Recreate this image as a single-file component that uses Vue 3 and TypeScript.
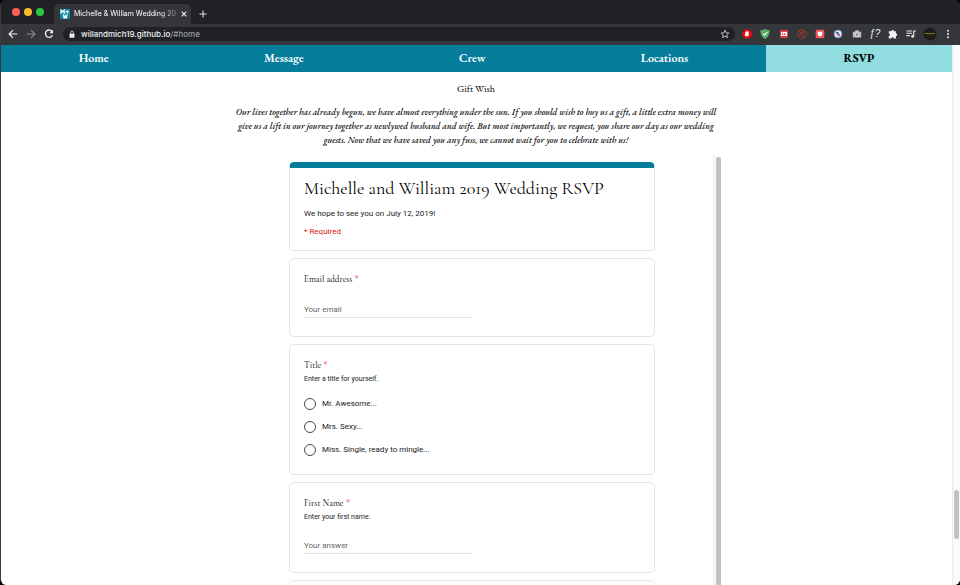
<script setup lang="ts">
import { ref } from 'vue'

interface Question {
  id: string
  label: string
  help?: string
  placeholder?: string
  type?: string
  options?: string[]
}

const links = [
  { label: 'Home', href: '#home' },
  { label: 'Message', href: '#message' },
  { label: 'Crew', href: '#crew' },
  { label: 'Locations', href: '#locations' },
  { label: 'RSVP', href: '#rsvp' },
]
const current = ref('#rsvp')

const wish = [
  'Our lives together has already begun, we have almost everything under the sun. If you should wish to buy us a gift, a little extra money will',
  'give us a lift in our journey together as newlywed husband and wife. But most importantly, we request, you share our day as our wedding',
  'guests. Now that we have saved you any fuss, we cannot wait for you to celebrate with us!',
]

const questions: Question[] = [
  { id: 'email', label: 'Email address', placeholder: 'Your email', type: 'email' },
  {
    id: 'title',
    label: 'Title',
    help: 'Enter a title for yourself.',
    options: ['Mr. Awesome...', 'Mrs. Sexy...', 'Miss. Single, ready to mingle...'],
  },
  { id: 'first', label: 'First Name', help: 'Enter your first name.', placeholder: 'Your answer', type: 'text' },
]
const chosen = ref('')
</script>

<template>
  <div class="browser">
    <header class="chrome">
      <div class="tabs">
        <div class="lights"><i class="red"></i><i class="amber"></i><i class="green"></i></div>
        <div class="tab">
          <svg class="favicon" viewBox="0 0 10 10" aria-hidden="true">
            <rect width="10" height="10" fill="#0c8ba5" />
            <path d="M1 5V1l1.600 2L4.200 1v4M3.200 5.500l1 3.700 1-2.600 1 2.600 1-3.700M5.500 2.600h3.300M7.500 1.400v3" fill="none" stroke="#fff" stroke-width="1.100" />
          </svg>
          <span class="tab-title">Michelle &amp; William Wedding 20</span>
          <button class="plain" aria-label="Close tab">
            <svg width="8" height="8" viewBox="0 0 8 8"><path d="M1.700 1.700l4.600 4.600M6.300 1.700L1.700 6.300" stroke="#e8eaed" stroke-width="1.200" /></svg>
          </button>
        </div>
        <button class="plain new-tab" aria-label="New tab">
          <svg width="10" height="10" viewBox="0 0 10 10"><path d="M5 1.500v7M1.500 5h7" stroke="#dfe1e5" stroke-width="1.100" /></svg>
        </button>
      </div>

      <div class="toolbar">
        <button class="plain" aria-label="Back">
          <svg width="14" height="14" viewBox="0 0 14 14"><path d="M11.300 7H3.400M7 3.100L3.100 7 7 10.900" fill="none" stroke="#f1f3f4" stroke-width="1.200" /></svg>
        </button>
        <button class="plain" aria-label="Forward">
          <svg width="14" height="14" viewBox="0 0 14 14"><path d="M2.700 7h7.900M7 3.100L10.900 7 7 10.900" fill="none" stroke="#8b8d91" stroke-width="1.100" /></svg>
        </button>
        <button class="plain" aria-label="Reload">
          <svg width="14" height="14" viewBox="0 0 14 14"><path d="M10.200 4.600A3.700 3.700 0 1 0 10.500 8.300" fill="none" stroke="#f1f3f4" stroke-width="1.300" /><path d="M11 2.800V6.300H7.500z" fill="#f1f3f4" /></svg>
        </button>
        <div class="address">
          <svg width="8" height="9" viewBox="0 0 8 9" aria-hidden="true"><rect x="1.500" y="3.400" width="5" height="4.400" rx=".6" fill="#e8eaed" /><path d="M2.700 3.600V2.400a1.300 1.300 0 0 1 2.600 0v1.200" fill="none" stroke="#e8eaed" stroke-width=".8" /></svg>
          <span class="url">willandmich19.github.io<span class="path">/#home</span></span>
          <button class="plain" aria-label="Bookmark">
            <svg width="10" height="10" viewBox="0 0 10 10"><path d="M5 1.200l1.100 2.600 2.800.2-2.100 1.900.6 2.700L5 7.200 2.600 8.600l.6-2.700L1.100 4l2.800-.2z" fill="none" stroke="#dfe1e5" stroke-width=".8" /></svg>
          </button>
        </div>
        <div class="extensions">
          <button class="plain" aria-label="Ad blocker">
            <svg width="14" height="14" viewBox="0 0 14 14"><path d="M5.100 2.500h3.800l2.600 2.600v3.800l-2.600 2.600H5.100L2.500 8.900V5.100z" fill="#f4090f" /><path d="M5.400 9.300L4.500 7.300l.8.300V4.900h.8v-.6h.9v-.3h.8v.8h.9v3.500l-.9 1z" fill="#fff" /></svg>
          </button>
          <button class="plain" aria-label="Shield">
            <svg width="14" height="14" viewBox="0 0 14 14"><path d="M7 2q2.200 1.200 4.600 1c.1 4.500-1.500 7.400-4.600 9C3.900 10.400 2.300 7.500 2.400 3 4.800 3.200 7 2 7 2z" fill="#57ad68" /><path d="M5 6.700l1.500 1.500 2.800-3" fill="none" stroke="#fff" stroke-width="1.100" /></svg>
          </button>
          <button class="plain" aria-label="Player">
            <svg width="14" height="14" viewBox="0 0 14 14"><rect x="3" y="3" width="8" height="8" rx="1.500" fill="#e33b44" /><rect x="4" y="5" width="6" height="4" rx=".5" fill="#fff" /><path d="M4.900 5.700l1.700 1.300-1.700 1.300zM7.300 5.700L9 7 7.300 8.300z" fill="#c9252e" /></svg>
          </button>
          <button class="plain" aria-label="Blocked">
            <svg width="14" height="14" viewBox="0 0 14 14"><g fill="none" stroke="#a33531"><circle cx="7" cy="7" r="4.300" stroke-width="1" /><path d="M4 4l6 6M4.500 8.500q1.500-4.500 5-3.500M4.500 6.500L8 9.700M6.500 3.500l2.700 2" stroke-width=".9" /></g></svg>
          </button>
          <button class="plain" aria-label="Pocket">
            <svg width="14" height="14" viewBox="0 0 14 14"><rect x="2.700" y="2.700" width="8.600" height="8.600" rx="1.300" fill="#ed5657" /><path d="M4.700 4.700h4.600v2.200Q9.200 9 7 9.500 4.800 9 4.700 6.900z" fill="#fff" /></svg>
          </button>
          <button class="plain" aria-label="Compass">
            <svg width="14" height="14" viewBox="0 0 14 14"><circle cx="7" cy="7" r="4" fill="#e8edf7" stroke="#5379b5" stroke-width="1.100" /><path d="M4.600 4.400l3.700 1.400L6 7.700z" fill="#2d4e88" /><path d="M9.500 9.600L5.900 8.200 8 6.200z" fill="#c43e46" /></svg>
          </button>
          <button class="plain" aria-label="Camera">
            <svg width="14" height="14" viewBox="0 0 14 14"><path d="M2.800 4.700h2l.8-1.500h2.800l.8 1.500h2v5.900H2.800z" fill="#b9bbbe" /><circle cx="7" cy="7.500" r="1.700" fill="#77797c" stroke="#f4f4f4" stroke-width=".8" /></svg>
          </button>
          <button class="plain glyph" aria-label="Font finder">ƒ?</button>
          <button class="plain" aria-label="Extensions">
            <svg width="14" height="14" viewBox="0 0 14 14"><path d="M2.800 4.200h2.500a1.300 1.300 0 1 1 2.600 0h2v2.300a1.300 1.300 0 1 1 0 2.600v2.300H7.700a1.200 1.200 0 0 0-2.400 0H2.800V8.900a1.200 1.200 0 0 0 0-2.400z" fill="#f1f3f4" /></svg>
          </button>
          <button class="plain" aria-label="Media queue">
            <svg width="14" height="14" viewBox="0 0 14 14"><path d="M2.500 4h5.600M2.500 6.300h5.600M2.500 8.600h3.300M9.700 9.300V4h2.200" fill="none" stroke="#e8eaed" stroke-width="1.100" /><circle cx="8.600" cy="9.400" r="1.400" fill="#e8eaed" /></svg>
          </button>
          <button class="plain" aria-label="Profile">
            <svg width="14" height="14" viewBox="0 0 14 14"><circle cx="7" cy="7" r="6.500" fill="#1c1c1b" /><path d="M2 6.500h10" stroke="#a0841c" stroke-width="1.200" stroke-dasharray="1.600 .4" /><path d="M4 8h6" stroke="#3c3720" stroke-width=".6" /></svg>
          </button>
          <button class="plain" aria-label="Menu">
            <svg width="14" height="14" viewBox="0 0 14 14" fill="#e8eaed"><circle cx="7" cy="3.700" r="1" /><circle cx="7" cy="7" r="1" /><circle cx="7" cy="10.300" r="1" /></svg>
          </button>
        </div>
      </div>
    </header>

    <div class="viewport">
      <div class="page">
        <nav class="menu">
          <a v-for="link in links" :key="link.href" :href="link.href" :class="{ active: link.href === current }" @click="current = link.href">{{ link.label }}</a>
        </nav>
        <main class="content">
          <h2>Gift Wish</h2>
          <p class="wish"><span v-for="line in wish" :key="line">{{ line }}</span></p>
          <div class="frame">
            <form class="form" @submit.prevent>
              <section class="card intro">
                <h1>Michelle and William 2019 Wedding RSVP</h1>
                <p>We hope to see you on July 12, 2019!</p>
                <p class="required">* Required</p>
              </section>
              <template v-for="q in questions" :key="q.id">
                <fieldset v-if="q.options" class="card" :aria-labelledby="q.id + '-label'">
                  <div :id="q.id + '-label'" class="label">{{ q.label }} <span class="star">*</span></div>
                  <p class="help">{{ q.help }}</p>
                  <div class="options">
                    <label v-for="option in q.options" :key="option">
                      <input v-model="chosen" type="radio" :name="q.id" :value="option" />{{ option }}
                    </label>
                  </div>
                </fieldset>
                <section v-else class="card">
                  <label class="label" :for="q.id">{{ q.label }} <span class="star">*</span></label>
                  <p v-if="q.help" class="help">{{ q.help }}</p>
                  <input :id="q.id" class="answer" :type="q.type" :placeholder="q.placeholder" />
                </section>
              </template>
              <section class="card"></section>
            </form>
            <div class="track inner"><div class="thumb"></div></div>
          </div>
        </main>
      </div>
      <div class="track outer"><div class="thumb"></div></div>
    </div>
  </div>
</template>

<style>
body {
  margin: 0;
  background: #000;
}
</style>

<style scoped>
* {
  box-sizing: border-box;
}
.browser {
  height: 100vh;
  display: flex;
  flex-direction: column;
  overflow: hidden;
  border-left: 1px solid #3a3b3e;
  border-radius: 6px;
  background: #35363a;
  font-family: Roboto, sans-serif;
}
.plain {
  display: inline-flex;
  align-items: center;
  justify-content: center;
  flex: none;
  padding: 0;
  border: 0;
  background: none;
}
.chrome {
  flex: none;
}
.tabs {
  display: flex;
  align-items: flex-end;
  height: 24px;
  background: #202124;
}
.lights {
  display: flex;
  gap: 4px;
  height: 24px;
  align-items: center;
  padding: 0 10px 0 11px;
}
.lights i {
  width: 8px;
  height: 8px;
  border-radius: 50%;
}
.red {
  background: #ff5f57;
}
.amber {
  background: #febc2e;
}
.green {
  background: #28c840;
}
.tab {
  display: flex;
  align-items: center;
  gap: 4px;
  width: 137px;
  height: 20px;
  padding: 0 5px 0 6px;
  border-radius: 5px 5px 0 0;
  background: #35363a;
}
.favicon {
  flex: none;
  width: 10px;
  height: 10px;
}
.tab-title {
  flex: 1;
  white-space: nowrap;
  font: 7px/12px Inter, sans-serif;
  color: #fff;
  mask-image: linear-gradient(to right, #000 84%, #0006 98%);
}
.new-tab {
  height: 20px;
  margin-left: 7px;
}
.toolbar {
  display: flex;
  align-items: center;
  gap: 4px;
  height: 21px;
  padding: 0 5px 1px;
}
.address {
  flex: 1;
  display: flex;
  align-items: center;
  gap: 5px;
  height: 14px;
  margin-left: 3px;
  padding: 0 5px;
  border-radius: 8px;
  background: #202124;
}
.url {
  flex: 1;
  font: 500 8px/12px Inter, sans-serif;
  color: #f1f3f4;
}
.path {
  color: #9aa0a6;
}
.extensions {
  display: flex;
  justify-content: space-between;
  width: 215px;
  margin-left: 1px;
}
.glyph {
  width: 14px;
  font: italic 10px/12px "Liberation Sans", sans-serif;
  color: #e8eaed;
}
.viewport {
  flex: 1;
  min-height: 0;
  display: flex;
  background: #fff;
}
.page {
  flex: 1;
  min-width: 0;
  overflow: hidden;
}
.menu {
  display: flex;
  background: #067d9b;
}
.menu a {
  flex: 1 1 auto;
  font: 600 12px/27px "EB Garamond", "Liberation Serif", serif;
  text-align: center;
  text-decoration: none;
  color: #fff;
}
.menu .active {
  background: #92dde0;
  font-weight: 700;
  color: #000;
}
.content {
  display: flex;
  flex-direction: column;
  align-items: center;
  padding-right: 1px;
  color: #202124;
}
h2 {
  margin: 10px 0 9px;
  font: 10px/14px "EB Garamond", "Liberation Serif", serif;
  color: #000;
}
.wish {
  margin: 0;
  font: italic 500 9px/14px "EB Garamond", "Liberation Serif", serif;
  text-align: center;
  white-space: nowrap;
  color: #000;
}
.wish span {
  display: block;
}
.frame {
  display: flex;
  width: 490px;
  max-width: 100%;
  margin-top: 8px;
}
.form {
  flex: 1;
  display: flex;
  flex-direction: column;
  gap: 7px;
  padding: 7px 58px 0;
}
.card {
  min-width: 0;
  min-height: 79px;
  margin: 0;
  padding: 14px 14px 18px;
  border: 1px solid #e2e4e7;
  border-radius: 5px;
  font-size: 8px;
  line-height: 12px;
}
.card p {
  margin: 0;
}
.intro {
  padding: 0 14px 12px;
  border-top: 6px solid #067d9b;
}
.intro h1 {
  margin: 6px 0;
  font: 18px/28px "Cormorant Garamond", "Liberation Serif", serif;
  white-space: nowrap;
  color: #000;
}
.intro .required {
  margin-top: 6px;
  color: #d91410;
}
.label {
  display: block;
  font: 500 9px/13px "Cormorant Garamond", "Liberation Serif", serif;
}
.star {
  color: #e5281e;
}
.card .help {
  font-size: 7px;
  line-height: 14px;
}
.options {
  display: flex;
  flex-direction: column;
  gap: 11px;
  padding-top: 12px;
}
.options label {
  display: flex;
  align-items: center;
  gap: 6px;
}
.options input {
  appearance: none;
  width: 12px;
  height: 12px;
  margin: 0;
  border: 1px solid #44484d;
  border-radius: 50%;
}
.options input:checked {
  background: radial-gradient(#067d9b 40%, transparent 45%);
}
.answer {
  display: block;
  width: 50%;
  height: 16px;
  margin-top: 16px;
  padding: 0;
  border: 0;
  border-bottom: 1px solid #dfe1e4;
  font: 8px/15px Roboto, sans-serif;
  color: #202124;
}
.answer::placeholder {
  color: #5f666c;
}
.help + .answer {
  margin-top: 14px;
}
.track {
  flex: none;
  width: 8px;
  background: #fafafa;
  border-left: 1px solid #ececec;
}
.thumb {
  width: 5px;
  margin-left: 1px;
  border-radius: 3px;
  background: #c1c1c1;
}
.inner {
  padding-top: 2px;
}
.inner .thumb {
  height: 100%;
  margin-left: 2px;
}
.outer {
  display: flex;
  flex-direction: column;
  justify-content: flex-end;
  padding-bottom: 46px;
}
.outer .thumb {
  height: 49px;
}
</style>
